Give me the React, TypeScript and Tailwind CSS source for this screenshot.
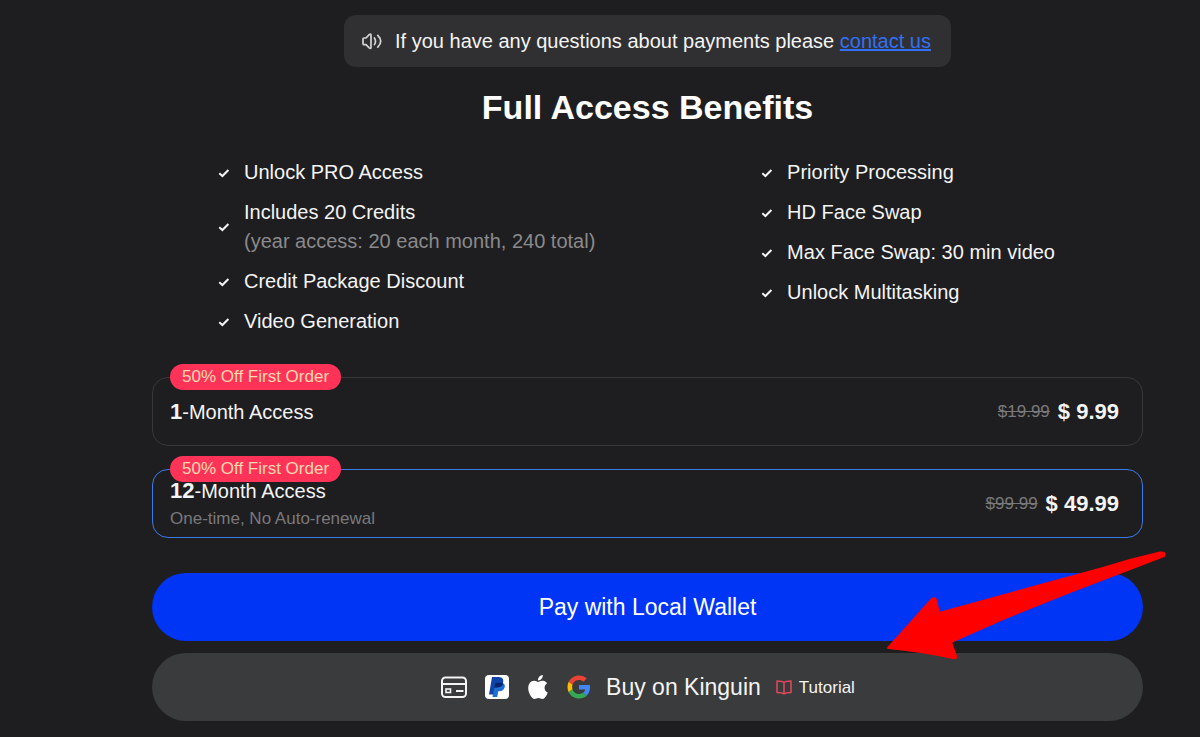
import React from 'react';

type Benefit = { title: string; note?: string };

type Plan = {
  id: string;
  months: string;
  note?: string;
  badge: string;
  oldPrice: string;
  price: string;
};

const leftBenefits: Benefit[] = [
  { title: 'Unlock PRO Access' },
  { title: 'Includes 20 Credits', note: '(year access: 20 each month, 240 total)' },
  { title: 'Credit Package Discount' },
  { title: 'Video Generation' },
];

const rightBenefits: Benefit[] = [
  { title: 'Priority Processing' },
  { title: 'HD Face Swap' },
  { title: 'Max Face Swap: 30 min video' },
  { title: 'Unlock Multitasking' },
];

const plans: Plan[] = [
  { id: 'month', months: '1', badge: '50% Off First Order', oldPrice: '$19.99', price: '$ 9.99' },
  {
    id: 'year',
    months: '12',
    note: 'One-time, No Auto-renewal',
    badge: '50% Off First Order',
    oldPrice: '$99.99',
    price: '$ 49.99',
  },
];

const SpeakerIcon = () => (
  <svg className="h-5 w-5 shrink-0" viewBox="0 0 20 20" fill="none" stroke="#d4d4d6" strokeWidth="1.7" strokeLinecap="round" strokeLinejoin="round">
    <path d="M1 8Q1 7 2 7H4L7.200 3.600Q9 2.200 9 4.200V16.200Q9 18.200 7.200 16.800L4 13.600H2Q1 13.600 1 12.600Z" />
    <path d="M12.400 7Q14.600 10.300 12.400 13.600" />
    <path d="M15.800 4.400Q21.600 10.300 15.800 16.200" />
  </svg>
);

const CheckIcon = () => (
  <svg className="h-3 w-3 shrink-0" viewBox="0 0 12 12" fill="none" stroke="#f4f4f5" strokeWidth="2">
    <path d="M1.3 6.2L4.4 9L10.4 3" />
  </svg>
);

const CardIcon = () => (
  <svg className="h-6 w-7" viewBox="0 0 28 24" fill="none" stroke="#f4f4f5" strokeWidth="2">
    <rect x="2" y="2.500" width="24" height="19.500" rx="3.500" />
    <path d="M2 9H26" />
    <rect x="6" y="14" width="4.500" height="3.500" strokeWidth="1.600" />
    <path d="M16 16H23.500" />
  </svg>
);

const PaypalIcon = () => (
  <svg className="h-6 w-6" viewBox="0 0 24 24">
    <rect width="24" height="24" rx="4" fill="#fff" />
    <path d="M9.4 8.3H17.8Q20.6 9.3 19.6 12.6Q18.5 16.2 14.4 16.2H13.3L12.2 22H7.5Z" fill="#1f6fd0" />
    <path d="M7 2H14Q19 2.3 18.2 7Q17.2 12.2 12 12.4H9.5L8.2 19.4H4Z" fill="#0f45a8" />
    <path d="M9.4 12.4H12Q17.2 12.2 18.4 8.6Q16 7.3 10.4 8Z" fill="#082270" />
  </svg>
);

const AppleIcon = () => (
  <svg className="h-6 w-6" viewBox="0 0 24 24" fill="#fff">
    <path d="M12.152 6.896c-.948 0-2.415-1.078-3.96-1.04-2.04.027-3.91 1.183-4.961 3.014-2.117 3.675-.546 9.103 1.519 12.09 1.013 1.454 2.208 3.09 3.792 3.039 1.52-.065 2.09-.987 3.935-.987 1.831 0 2.35.987 3.96.948 1.637-.026 2.676-1.48 3.676-2.948 1.156-1.688 1.636-3.325 1.662-3.415-.039-.013-3.182-1.221-3.22-4.857-.026-3.04 2.48-4.494 2.597-4.559-1.429-2.09-3.623-2.324-4.39-2.376-2-.156-3.675 1.09-4.61 1.09zM15.53 3.83c.843-1.012 1.4-2.427 1.245-3.83-1.207.052-2.662.805-3.532 1.818-.78.896-1.454 2.338-1.273 3.714 1.338.104 2.715-.688 3.559-1.701" />
  </svg>
);

const GoogleIcon = () => (
  <svg className="h-6 w-6" viewBox="-1 -1 50 50">
    <path fill="#ea4335" d="M24 9.5c3.5 0 6.7 1.2 9.2 3.6l6.9-6.9C35.9 2.4 30.5 0 24 0 14.6 0 6.5 5.4 2.6 13.2l8 6.2C12.4 13.7 17.7 9.5 24 9.5z" />
    <path fill="#4285f4" d="M47 24.6c0-1.6-.2-3.1-.4-4.6H24v9h12.9c-.6 3-2.3 5.5-4.8 7.2l7.7 6C44.4 38 47 31.8 47 24.6z" />
    <path fill="#fbbc05" d="M10.5 28.6c-.5-1.5-.8-3-.8-4.6s.3-3.1.8-4.6l-8-6.2C.9 16.5 0 20.1 0 24s.9 7.5 2.6 10.8z" />
    <path fill="#34a853" d="M24 48c6.5 0 11.9-2.1 15.9-5.8l-7.7-6c-2.2 1.5-4.9 2.3-8.2 2.3-6.3 0-11.6-4.2-13.5-9.9l-8 6.2C6.5 42.6 14.6 48 24 48z" />
  </svg>
);

const BookIcon = () => (
  <svg className="h-4 w-4" viewBox="0 0 16 16" fill="none" stroke="#e5485d" strokeWidth="1.5" strokeLinejoin="round">
    <path d="M8 3.5Q6.500 2 1 2V13.500Q6.500 13.500 8 15Q9.500 13.500 15 13.500V2Q9.500 2 8 3.500ZM8 3.500V15" />
  </svg>
);

const BenefitList = ({ items }: { items: Benefit[] }) => (
  <ul className="flex flex-col gap-[11px]">
    {items.map((item) => (
      <li key={item.title} className="flex items-center gap-[14px]">
        <CheckIcon />
        <div>
          <p>{item.title}</p>
          {item.note && <p className="text-[#8a8a8c]">{item.note}</p>}
        </div>
      </li>
    ))}
  </ul>
);

const PlanCard = ({ plan, selected, onSelect }: { plan: Plan; selected: boolean; onSelect: () => void }) => (
  <button
    type="button"
    aria-pressed={selected}
    onClick={onSelect}
    className={`relative flex h-[69px] w-full items-center justify-between rounded-2xl border pl-[17px] pr-[23px] text-left ${
      selected ? 'border-[#3b7ae8]' : 'border-[#38383a]'
    }`}
  >
    <span className="absolute -top-[14px] left-[17px] rounded-full bg-[#ff3358] px-3 text-[17px] leading-[26px] text-[#ffd9b0]">
      {plan.badge}
    </span>
    <span className="flex flex-col">
      <span>
        <b className="text-[22px]">{plan.months}</b>-Month Access
      </span>
      {plan.note && <span className="text-[17px] leading-[26px] text-[#79797b]">{plan.note}</span>}
    </span>
    <span className="flex items-center gap-2">
      <s className="text-[17px] text-[#79797b]">{plan.oldPrice}</s>
      <b className="text-[22px]">{plan.price}</b>
    </span>
  </button>
);

const App = () => {
  const [selected, setSelected] = React.useState('year');

  return (
    <main className="min-h-screen bg-[#1e1e20] pt-[15px] pr-[57px] pb-4 pl-[152px] font-['Liberation_Sans',Arial,sans-serif] text-xl leading-[29px] text-[#f4f4f5]">
      <div className="mx-auto flex h-[52px] w-fit items-center gap-[13px] rounded-xl bg-[#303032] pr-5 pl-[18px]">
        <SpeakerIcon />
        <p>
          If you have any questions about payments please{' '}
          <a href="#contact" className="text-[#3370f5] underline">contact us</a>
        </p>
      </div>

      <h1 className="mt-4 text-center text-[34px] leading-[48px] font-bold text-white">Full Access Benefits</h1>

      <section className="mt-[27px] flex justify-between pr-[88px] pl-[66px]">
        <BenefitList items={leftBenefits} />
        <BenefitList items={rightBenefits} />
      </section>

      <section className="mt-[41px] flex flex-col gap-[23px]">
        {plans.map((plan) => (
          <PlanCard key={plan.id} plan={plan} selected={selected === plan.id} onSelect={() => setSelected(plan.id)} />
        ))}
      </section>

      <section className="relative mt-[35px] flex flex-col gap-3">
        <button type="button" className="h-[68px] rounded-full bg-[#0035f5] text-[23px] text-white">
          Pay with Local Wallet
        </button>
        <div className="flex h-[68px] items-center justify-center gap-[15px] rounded-full bg-[#3a3b3c]">
          <button type="button" className="flex items-center gap-[15px] text-[23px]">
            <span className="flex items-center gap-[17px]">
              <CardIcon />
              <PaypalIcon />
              <AppleIcon />
              <GoogleIcon />
            </span>
            Buy on Kinguin
          </button>
          <a href="#tutorial" className="flex items-center gap-[7px] text-[17px]">
            <BookIcon />
            Tutorial
          </a>
        </div>

        {/* Pointer arrow over the payment buttons */}
        <svg className="pointer-events-none absolute -top-[23px] -right-[23px] h-[110px] w-[280px]" viewBox="0 0 280 110" fill="#ff0000" stroke="#ff0000" strokeWidth="2" strokeLinejoin="round">
          <path d="M2 98L46 49Q49 47 50 50L53 63L151 36L217 18Q245 9 274 2.5Q280 2 278 6L184 42L117 69L65 92L70 106Q71 109 67 108Q35 101 2 98Z" />
        </svg>
      </section>
    </main>
  );
};

export default App;
